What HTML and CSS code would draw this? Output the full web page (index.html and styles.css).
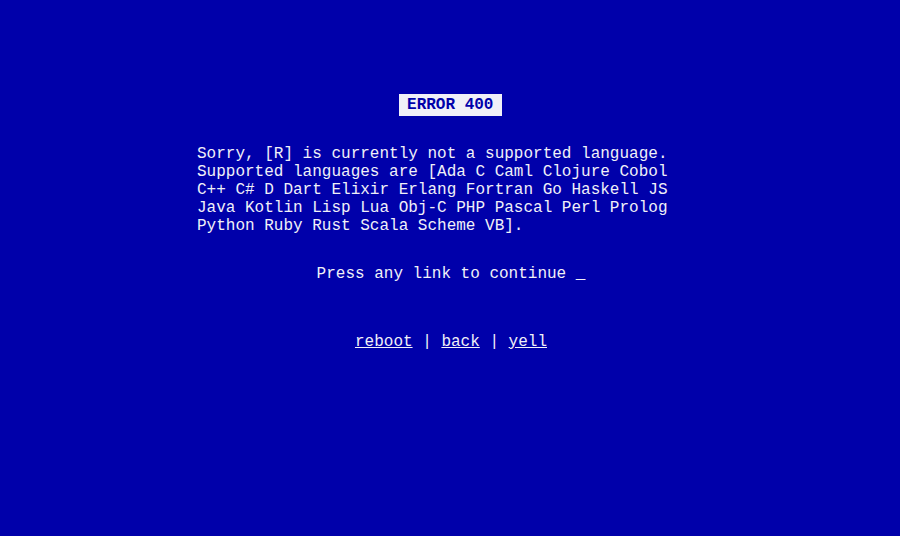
FILE: index.html
```html
<!DOCTYPE html>
<html lang="en">
<head>
<meta charset="utf-8">
<title>Error 400</title>
<link rel="stylesheet" href="styles.css">
</head>
<body>
<main class="screen">
  <div class="title-wrap"><span class="title">ERROR 400</span></div>
  <p class="message">Sorry, [R] is currently not a supported language.<br>Supported languages are [Ada C Caml Clojure Cobol C++ C# D Dart Elixir Erlang Fortran Go Haskell JS Java Kotlin Lisp Lua Obj-C PHP Pascal Perl Prolog Python Ruby Rust Scala Scheme VB].</p>
  <p class="prompt">Press any link to continue _</p>
  <nav class="links"><a href="#">reboot</a> | <a href="#">back</a> | <a href="#">yell</a></nav>
</main>
</body>
</html>
```
FILE: styles.css
```css
html, body {
  margin: 0;
  padding: 0;
  height: 100%;
  background: #0000aa;
}
body {
  font-family: "Liberation Mono", "Courier New", monospace;
  font-size: 16px;
  line-height: 18px;
  color: #f0f0f8;
}
.screen {
  padding-top: 94px;
}
.title-wrap {
  text-align: center;
  padding-left: 1px;
}
.title {
  display: inline-block;
  background: #f0f0f8;
  color: #0000aa;
  font-weight: bold;
  padding: 2px 8.5px 2px 8px;
}
.message {
  width: 506px;
  margin: 29px auto 0;
}
.prompt {
  text-align: center;
  padding-left: 2px;
  margin: 30px 0 0;
}
.links {
  text-align: center;
  padding-left: 2px;
  margin-top: 50px;
}
.links a {
  color: #f0f0f8;
  text-decoration: underline;
}
```
